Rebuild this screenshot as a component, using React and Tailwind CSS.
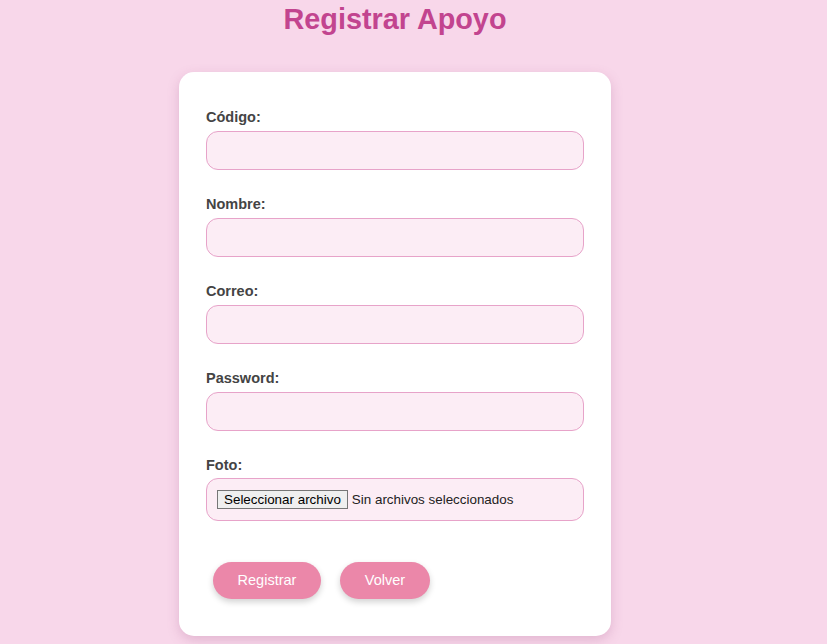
export default function App() {
  const fields = [
    { label: 'Código:', type: 'text' },
    { label: 'Nombre:', type: 'text' },
    { label: 'Correo:', type: 'email' },
    { label: 'Password:', type: 'password' },
  ];

  return (
    <div
      className="min-h-screen w-full bg-[#f8d7ea] pb-[9px]"
      style={{ fontFamily: '"Liberation Sans", Arial, sans-serif' }}
    >
      <div className="flex w-[790px] flex-col items-center">
        <h1 className="mt-[3px] text-[28.8px] font-bold leading-[1.15] text-[#c2448f]">
          Registrar Apoyo
        </h1>

        {/* Card */}
        <form
          className="mt-[36px] flex w-[432px] flex-col rounded-[15px] bg-white px-[27px] pt-[37px] pb-[37px] shadow-[0_4px_12px_rgba(160,80,130,0.25)]"
          onSubmit={(e) => e.preventDefault()}
        >
          {fields.map((f) => (
            <div key={f.label} className="mb-[26px] flex flex-col">
              <label className="mb-[5px] text-[14.5px] font-bold leading-[17px] text-[#444]">
                {f.label}
              </label>
              <input
                type={f.type}
                className="h-[39px] w-full rounded-[12px] border border-[#e7a3c9] bg-[#fcedf5] px-3 text-sm outline-none"
              />
            </div>
          ))}

          <div className="flex flex-col">
            <label className="mb-[4px] text-[14.5px] font-bold leading-[17px] text-[#444]">
              Foto:
            </label>
            <div className="flex h-[43px] w-full items-center rounded-[12px] border border-[#e7a3c9] bg-[#fcedf5] px-[10px] text-[13.4px] text-[#222]">
              <span className="mr-[4px] border border-[#767676] bg-[#efefef] px-[6px] leading-[17px] text-black">
                Seleccionar archivo
              </span>
              <span>Sin archivos seleccionados</span>
            </div>
          </div>

          <div className="mt-[41px] flex gap-[19px] pl-[7px]">
            <button
              type="submit"
              className="h-[37px] w-[108px] rounded-full bg-[#eb87a9] text-[14.5px] text-white shadow-[0_3px_6px_rgba(0,0,0,0.18)]"
            >
              Registrar
            </button>
            <button
              type="button"
              className="h-[37px] w-[90px] rounded-full bg-[#eb87a9] text-[14.5px] text-white shadow-[0_3px_6px_rgba(0,0,0,0.18)]"
            >
              Volver
            </button>
          </div>
        </form>
      </div>
    </div>
  );
}
